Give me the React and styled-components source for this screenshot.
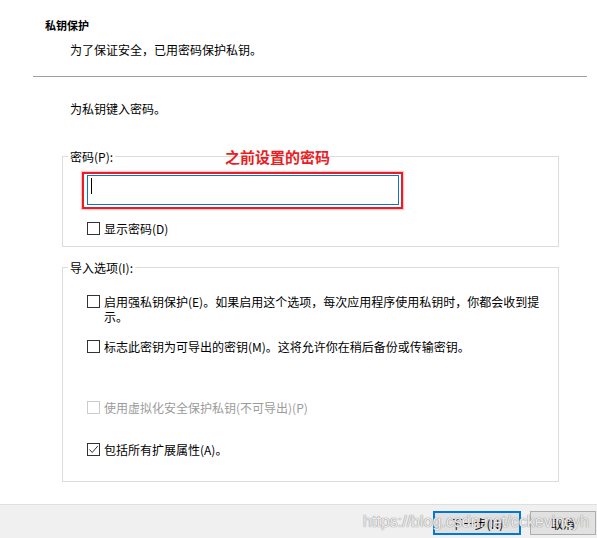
import React from "react";
import styled, { createGlobalStyle } from "styled-components";

const GlobalStyle = createGlobalStyle`
  html, body {
    margin: 0;
    padding: 0;
    background: #ffffff;
  }
  body {
    font-family: "Noto Sans CJK SC", "Microsoft YaHei", sans-serif;
    font-size: 12px;
    color: #000;
  }
`;

const Window = styled.div`
  position: relative;
  width: 597px;
  height: 538px;
  display: flex;
  flex-direction: column;
  overflow: hidden;
  background: #fff;
`;

const Header = styled.div`
  padding-top: 17px;
`;

const Title = styled.div`
  padding-left: 45px;
  font-size: 11px;
  font-weight: 700;
  line-height: 16px;
`;

const Subtitle = styled.div`
  margin-top: 9px;
  padding-left: 70px;
  line-height: 16px;
`;

const Separator = styled.div`
  margin: 18px 0 0 33px;
  width: 554px;
  height: 1px;
  background: #a0a0a0;
`;

const Body = styled.div`
  flex: 1;
  padding-left: 62px;
  width: 497px;
`;

const Instruction = styled.div`
  margin-top: 24px;
  padding-left: 8px;
  line-height: 16px;
`;

const Group = styled.div`
  position: relative;
  margin-top: ${(p) => p.$top}px;
  border: 1px solid #dcdcdc;
  padding: ${(p) => p.$padTop}px 0 ${(p) => p.$padBottom}px 24px;
`;

const Legend = styled.span`
  position: absolute;
  top: -8px;
  left: 5px;
  padding: 0 2px;
  background: #fff;
  line-height: 16px;
`;

const Annotation = styled.span`
  position: absolute;
  top: -9px;
  left: 162px;
  color: #ea1c24;
  font-size: 15px;
  font-weight: 700;
  line-height: 18px;
`;

const Highlight = styled.div`
  width: fit-content;
  margin-left: -5px;
  padding: 1px 2px 2px 3px;
  border: 2px solid #ea1c24;
  box-shadow: 0 0 1px 1px rgba(234, 28, 36, 0.25);
`;

const TextBox = styled.div`
  box-sizing: border-box;
  width: 312px;
  height: 30px;
  border: 1px solid #0078d7;
  padding: 2px 0 0 3px;
  background: #fff;
`;

const Caret = styled.div`
  width: 1px;
  height: 16px;
  background: #000;
`;

const Row = styled.div`
  display: flex;
  align-items: flex-start;
  margin-top: ${(p) => p.$top}px;
  color: ${(p) => (p.$disabled ? "#9b9b9b" : "#000")};
  line-height: 15px;
`;

const Box = styled.span`
  flex: none;
  box-sizing: border-box;
  width: 13px;
  height: 13px;
  margin: 1px 4px 0 0;
  border: 1px solid ${(p) => (p.$disabled ? "#cccccc" : "#333333")};
  background: #fff;
  display: flex;
  align-items: center;
  justify-content: center;
`;

const Label = styled.span`
  max-width: 441px;
`;

const Footer = styled.div`
  box-sizing: border-box;
  height: 34px;
  border-top: 1px solid #dfdfdf;
  background: #f0f0f0;
  display: flex;
  justify-content: flex-end;
  align-items: flex-start;
  gap: 9px;
  padding: 6px 1px 0 0;
`;

const Button = styled.button`
  box-sizing: border-box;
  width: ${(p) => p.$width}px;
  height: 24px;
  padding: 0;
  background: #e1e1e1;
  border: ${(p) => (p.$primary ? "2px solid #0078d7" : "1px solid #adadad")};
  font-family: inherit;
  font-size: 12px;
  color: #000;
`;

const Watermark = styled.span`
  position: absolute;
  right: 8px;
  bottom: 7px;
  font-family: "Liberation Sans", Arial, sans-serif;
  font-size: 16px;
  color: rgba(255, 255, 255, 0.85);
  text-shadow: 0 0 1px #8a8a8a, 0 0 1px #8a8a8a;
  pointer-events: none;
`;

const Check = ({ checked, disabled }) => (
  <Box $disabled={disabled}>
    {checked && (
      <svg width="11" height="11" viewBox="0 0 11 11">
        <polyline
          points="1.5,5.5 4.2,8.5 9.8,2"
          fill="none"
          stroke="#333"
          strokeWidth="1"
        />
      </svg>
    )}
  </Box>
);

const options = [
  {
    text: "启用强私钥保护(E)。如果启用这个选项，每次应用程序使用私钥时，你都会收到提示。",
    top: 26,
  },
  { text: "标志此密钥为可导出的密钥(M)。这将允许你在稍后备份或传输密钥。", top: 15 },
  { text: "使用虚拟化安全保护私钥(不可导出)(P)", top: 46, disabled: true },
  { text: "包括所有扩展属性(A)。", top: 27, checked: true },
];

const App = () => {
  return (
    <>
      <GlobalStyle />
      <Window>
        <Header>
          <Title>私钥保护</Title>
          <Subtitle>为了保证安全，已用密码保护私钥。</Subtitle>
        </Header>
        <Separator />
        <Body>
          <Instruction>为私钥键入密码。</Instruction>
          <Group $top={39} $padTop={15} $padBottom={10}>
            <Legend>密码(P):</Legend>
            <Annotation>之前设置的密码</Annotation>
            <Highlight>
              <TextBox>
                <Caret />
              </TextBox>
            </Highlight>
            <Row $top={12}>
              <Check />
              <Label>显示密码(D)</Label>
            </Row>
          </Group>
          <Group $top={20} $padTop={0} $padBottom={24}>
            <Legend>导入选项(I):</Legend>
            {options.map((o) => (
              <Row key={o.text} $top={o.top} $disabled={o.disabled}>
                <Check checked={o.checked} disabled={o.disabled} />
                <Label>{o.text}</Label>
              </Row>
            ))}
          </Group>
        </Body>
        <Footer>
          <Button $primary $width={88}>下一步(N)</Button>
          <Button $width={66}>取消</Button>
        </Footer>
        <Watermark>https://blog.csdn.net/cckevincyh</Watermark>
      </Window>
    </>
  );
};

export default App;
